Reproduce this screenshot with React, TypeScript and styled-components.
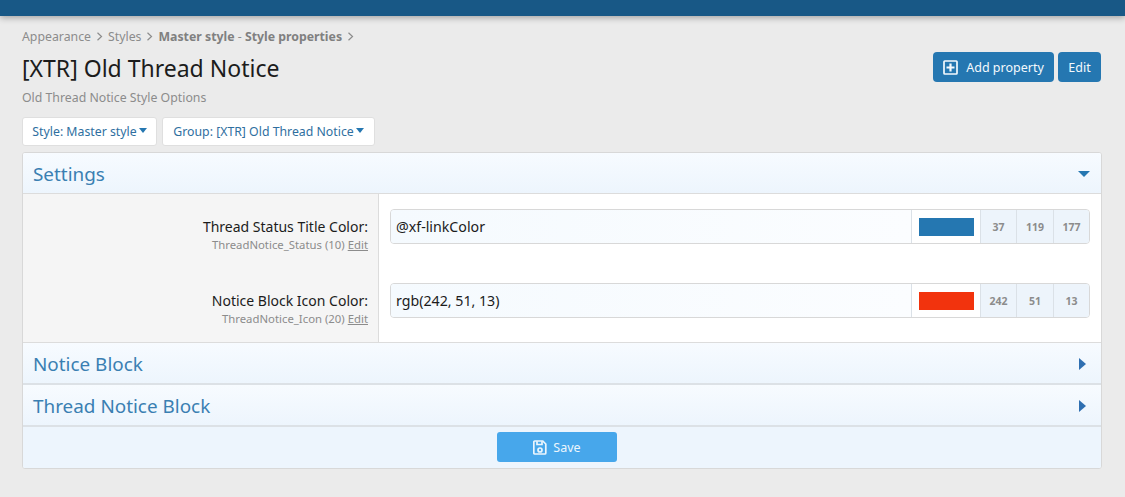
import React from "react";
import styled, { createGlobalStyle } from "styled-components";

const Global = createGlobalStyle`
  html, body { margin: 0; padding: 0; background: #ebebeb; }
  body { font-family: "Noto Sans", "Open Sans", sans-serif; font-size: 13px; color: #141414; }
`;

const Page = styled.div`
  width: 1125px;
  height: 497px;
  overflow: hidden;
  background: #ebebeb;
`;

const TopBar = styled.div`
  height: 16px;
  background: #185886;
  box-shadow: 0 2px 6px rgba(0, 0, 0, 0.3);
`;

const Content = styled.div`
  padding: 12px 23px 0 22px;
`;

const Crumbs = styled.div`
  display: flex;
  align-items: center;
  height: 17px;
  font-size: 12.3px;
  color: #8c8c8c;
`;

const Crumb = styled.span`
  display: inline-flex;
  align-items: center;
  white-space: nowrap;
`;

const CrumbStrong = styled.b`
  font-weight: 700;
  color: #808080;
`;

const Chevron = styled.svg`
  width: 7px;
  height: 9px;
  margin: 0 5px;
  fill: none;
  stroke: #8c8c8c;
  stroke-width: 1.2;
`;

const HeaderRow = styled.div`
  display: flex;
  justify-content: space-between;
  align-items: flex-start;
  margin-top: 7px;
  height: 65px;
`;

const TitleBlock = styled.div`
  display: flex;
  flex-direction: column;
`;

const Title = styled.h1`
  margin: 0;
  font-size: 23px;
  font-weight: 400;
  line-height: 32px;
  color: #1c1c1c;
  white-space: nowrap;
`;

const Description = styled.div`
  margin-top: 6px;
  font-size: 12.3px;
  line-height: 16px;
  color: #8c8c8c;
`;

const Actions = styled.div`
  display: flex;
  gap: 4px;
  padding-right: 1px;
`;

const ActionButton = styled.a`
  display: inline-flex;
  align-items: center;
  justify-content: center;
  box-sizing: border-box;
  height: 30px;
  width: ${(p: { $w: number }) => p.$w}px;
  background: #2577b1;
  border-radius: 4px;
  color: #f4f9fd;
  font-size: 12.5px;
  white-space: nowrap;
`;

const PlusIcon = styled.svg`
  width: 15px;
  height: 15px;
  margin-right: 8px;
  fill: none;
  stroke: #f4f9fd;
`;

const Filters = styled.div`
  display: flex;
  gap: 5px;
  height: 29px;
`;

const FilterButton = styled.div`
  display: flex;
  align-items: center;
  justify-content: center;
  box-sizing: border-box;
  width: ${(p: { $w: number }) => p.$w}px;
  background: #fff;
  border: 1px solid #dfdfdf;
  border-radius: 3px;
  color: #2f6f9f;
  font-size: 12.3px;
  white-space: nowrap;
`;

const Caret = styled.i`
  display: inline-block;
  margin-left: 2px;
  margin-top: -2px;
  width: 0;
  height: 0;
  border-left: 4px solid transparent;
  border-right: 4px solid transparent;
  border-top: 5px solid #2577b1;
`;

const Block = styled.div`
  margin-top: 6px;
  box-sizing: border-box;
  height: 317px;
  border: 1px solid #d8d8d8;
  border-radius: 3px;
  background: #fff;
  overflow: hidden;
`;

const SectionHeader = styled.div`
  display: flex;
  align-items: center;
  justify-content: space-between;
  box-sizing: border-box;
  height: 42px;
  padding: 1px 12px 0 10px;
  background: linear-gradient(180deg, #f7fbff 0%, #edf5fd 100%);
  border-bottom: 2px solid #dce1e6;
  color: #3a7fb2;
  font-size: 18.9px;
  line-height: 26px;
`;

const OpenHeader = styled(SectionHeader)`
  border-bottom: 1px solid #dcdcdc;
  height: 41px;
  padding-right: 11px;
`;

const CaretDown = styled.i`
  width: 0;
  height: 0;
  border-left: 6px solid transparent;
  border-right: 6px solid transparent;
  border-top: 6px solid #2577b1;
`;

const CaretRight = styled.i`
  width: 0;
  height: 0;
  margin-right: 3px;
  border-top: 6px solid transparent;
  border-bottom: 6px solid transparent;
  border-left: 7px solid #2f6fb1;
`;

const Rows = styled.div`
  display: grid;
  grid-template-columns: 356px 1fr;
  box-sizing: border-box;
  height: 149px;
  border-bottom: 1px solid #dcdcdc;
`;

const Labels = styled.div`
  box-sizing: border-box;
  display: flex;
  flex-direction: column;
  gap: 39px;
  background: #f5f5f5;
  border-right: 1px solid #dcdcdc;
  padding: 23px 10px 0 0;
  text-align: right;
`;

const LabelGroup = styled.div`
  height: 35px;
`;

const LabelText = styled.div`
  font-size: 14px;
  line-height: 19px;
  color: #1c1c1c;
`;

const Hint = styled.div`
  font-size: 11.35px;
  line-height: 14px;
  margin-top: 2px;
  color: #8c8c8c;
`;

const HintLink = styled.span`
  text-decoration: underline;
`;

const Inputs = styled.div`
  padding: 15px 11px 0;
  display: flex;
  flex-direction: column;
  gap: 39px;
`;

const ColorField = styled.div`
  display: flex;
  height: 35px;
  box-sizing: border-box;
  border: 1px solid #d8d8d8;
  border-radius: 4px;
  overflow: hidden;
  background: #f5f9fd;
`;

const ColorText = styled.div`
  flex: 1;
  display: flex;
  align-items: center;
  padding-left: 5px;
  font-size: 14.2px;
  color: #1c1c1c;
  background: linear-gradient(90deg, #f5fafe, #fbfdff);
`;

const SwatchCell = styled.div`
  width: 69px;
  box-sizing: border-box;
  display: flex;
  align-items: center;
  justify-content: center;
  border-left: 1px solid #dbe1e7;
  background: #fff;
`;

const Swatch = styled.div`
  width: 55px;
  height: 18px;
  background: ${(p: { $c: string }) => p.$c};
`;

const Channel = styled.div`
  width: ${(p: { $w: number }) => p.$w}px;
  box-sizing: border-box;
  display: flex;
  align-items: center;
  justify-content: center;
  border-left: 1px solid #dbe1e7;
  background: #edf4fb;
  color: #8c8c8c;
  font-size: 10.5px;
  font-weight: 700;
`;

const Footer = styled.div`
  display: flex;
  justify-content: center;
  padding: 5px 10px 0 0;
  height: 41px;
  box-sizing: border-box;
  background: #edf5fd;
`;

const SaveButton = styled.button`
  display: inline-flex;
  align-items: center;
  justify-content: center;
  gap: 6px;
  width: 120px;
  height: 30px;
  border: 0;
  border-radius: 3px;
  background: #47a7eb;
  color: #ecf6fd;
  font: inherit;
  font-size: 12.5px;
`;

const SaveIcon = styled.svg`
  width: 14px;
  height: 15px;
  fill: none;
  stroke: #ecf6fd;
  stroke-width: 1.7;
`;

const Sep = () => (
  <Chevron viewBox="0 0 7 9">
    <path d="M1.5 .8 5.5 4.5 1.5 8.2" />
  </Chevron>
);

const fields = [
  { label: "Thread Status Title Color:", hint: "ThreadNotice_Status (10)", value: "@xf-linkColor", color: "#2577b1", rgb: ["37", "119", "177"] },
  { label: "Notice Block Icon Color:", hint: "ThreadNotice_Icon (20)", value: "rgb(242, 51, 13)", color: "#f2330d", rgb: ["242", "51", "13"] },
];

const channelWidths = [36, 37, 36];

export default function App() {
  return (
    <Page>
      <Global />
      <TopBar />
      <Content>
        <Crumbs>
          <Crumb>Appearance</Crumb>
          <Sep />
          <Crumb>Styles</Crumb>
          <Sep />
          <Crumb>
            <CrumbStrong>Master style</CrumbStrong>&nbsp;-&nbsp;<CrumbStrong>Style properties</CrumbStrong>
          </Crumb>
          <Sep />
        </Crumbs>
        <HeaderRow>
          <TitleBlock>
            <Title>[XTR] Old Thread Notice</Title>
            <Description>Old Thread Notice Style Options</Description>
          </TitleBlock>
          <Actions>
            <ActionButton $w={121}>
              <PlusIcon viewBox="0 0 15 15">
                <rect x="1" y="1" width="13" height="13" rx="0.8" strokeWidth="1.7" />
                <path d="M7.5 3.5v8M3.5 7.5h8" strokeWidth="2.2" />
              </PlusIcon>
              Add property
            </ActionButton>
            <ActionButton $w={43}>Edit</ActionButton>
          </Actions>
        </HeaderRow>
        <Filters>
          <FilterButton $w={135}>
            Style: Master style<Caret />
          </FilterButton>
          <FilterButton $w={213}>
            Group: [XTR] Old Thread Notice<Caret />
          </FilterButton>
        </Filters>
        <Block>
          <OpenHeader>
            Settings
            <CaretDown />
          </OpenHeader>
          <Rows>
            <Labels>
              {fields.map((f) => (
                <LabelGroup key={f.label}>
                  <LabelText>{f.label}</LabelText>
                  <Hint>
                    {f.hint} <HintLink>Edit</HintLink>
                  </Hint>
                </LabelGroup>
              ))}
            </Labels>
            <Inputs>
              {fields.map((f) => (
                <ColorField key={f.label}>
                  <ColorText>{f.value}</ColorText>
                  <SwatchCell>
                    <Swatch $c={f.color} />
                  </SwatchCell>
                  {f.rgb.map((v, i) => (
                    <Channel key={i} $w={channelWidths[i]}>
                      {v}
                    </Channel>
                  ))}
                </ColorField>
              ))}
            </Inputs>
          </Rows>
          <SectionHeader>
            Notice Block
            <CaretRight />
          </SectionHeader>
          <SectionHeader>
            Thread Notice Block
            <CaretRight />
          </SectionHeader>
          <Footer>
            <SaveButton>
              <SaveIcon viewBox="0 0 14 15">
                <path d="M1.8 1h8l3 3v9a1 1 0 0 1-1 1h-10a1 1 0 0 1-1-1V2a1 1 0 0 1 1-1z" />
                <path d="M4 1.2v3.3h5V1.2" />
                <circle cx="7" cy="10" r="2" />
              </SaveIcon>
              Save
            </SaveButton>
          </Footer>
        </Block>
      </Content>
    </Page>
  );
}
